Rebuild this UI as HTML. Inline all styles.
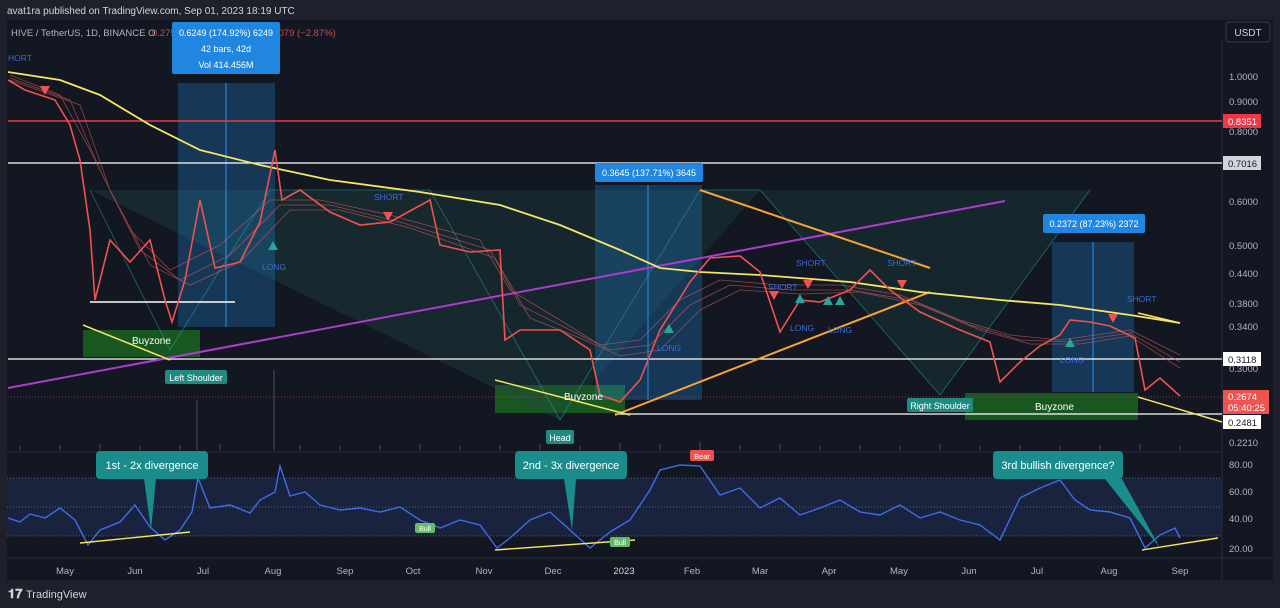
<!DOCTYPE html>
<html><head><meta charset="utf-8"><style>
body{margin:0;width:1280px;height:608px;background:#1e212b;overflow:hidden;font-family:"Liberation Sans",sans-serif}
svg{position:absolute;left:0;top:0}
</style></head><body>
<svg width="1280" height="608" viewBox="0 0 1280 608" font-family="Liberation Sans, sans-serif">
<rect width="1280" height="608" fill="#1e212b"/>
<text x="7" y="14" fill="#d1d4dc" font-size="10">avat1ra published on TradingView.com, Sep 01, 2023 18:19 UTC</text>
<rect x="7" y="20" width="1266" height="560" fill="#131722"/>
<line x1="1222" y1="40" x2="1222" y2="580" stroke="#2a2e39"/>
<line x1="7" y1="452" x2="1222" y2="452" stroke="#2a2e39"/>
<line x1="7" y1="558" x2="1273" y2="558" stroke="#2a2e39"/>
<rect x="1226" y="22" width="44" height="20" rx="3" fill="none" stroke="#363a45"/>
<text x="1248" y="36" fill="#d1d4dc" font-size="10" text-anchor="middle">USDT</text>
<text x="11" y="36" fill="#b2b5be" font-size="9.5">HIVE / TetherUS, 1D, BINANCE  O</text>
<text x="152" y="36" fill="#c94a4a" font-size="9.5">0.275</text>
<text x="236" y="36" fill="#c94a4a" font-size="9.5">2674  −0.0079 (−2.87%)</text>
<!-- buyzones -->
<rect x="83" y="330" width="117" height="27" fill="#1b5e20" opacity=".9"/>
<rect x="495" y="385" width="130" height="28" fill="#1b5e20" opacity=".9"/>
<rect x="965" y="393" width="173" height="27" fill="#1b5e20" opacity=".9"/>
<!-- teal shaded triangles area -->
<polygon points="90,190 430,190 560,420" fill="#1f4a48" opacity=".35"/>
<polygon points="430,190 1090,190 940,395 760,190 560,420" fill="#1f4a48" opacity=".3"/>
<polyline points="90,190 170,350 270,190 430,190 560,420 700,190 760,190 940,395 1090,190" fill="none" stroke="#26a69a" stroke-width=".8" opacity=".6"/>
<!-- measure boxes -->
<rect x="178" y="83" width="97" height="244" fill="#2196f3" opacity=".25"/>
<rect x="595" y="185" width="107" height="215" fill="#2196f3" opacity=".25"/>
<rect x="1052" y="242" width="82" height="150" fill="#2196f3" opacity=".25"/>
<line x1="226" y1="83" x2="226" y2="327" stroke="#2196f3"/>
<line x1="648" y1="185" x2="648" y2="400" stroke="#2196f3"/>
<line x1="1093" y1="242" x2="1093" y2="392" stroke="#2196f3"/>
<!-- horizontal lines -->
<line x1="8" y1="121" x2="1222" y2="121" stroke="#f23645" stroke-width="1.5"/>
<line x1="8" y1="163" x2="1222" y2="163" stroke="#fff" stroke-width="1.3"/>
<line x1="8" y1="359" x2="1222" y2="359" stroke="#fff" stroke-width="1.3"/>
<line x1="615" y1="414" x2="1222" y2="414" stroke="#fff" stroke-width="1.3"/>
<line x1="90" y1="302" x2="235" y2="302" stroke="#fff" stroke-width="1.5"/>
<line x1="8" y1="397" x2="1222" y2="397" stroke="#f23645" stroke-dasharray="1 2" opacity=".6"/>
<!-- purple / orange / yellow -->
<line x1="8" y1="388" x2="1005" y2="201" stroke="#b03ad0" stroke-width="2"/>
<line x1="615" y1="415" x2="930" y2="292" stroke="#f7a335" stroke-width="2"/>
<line x1="700" y1="190" x2="930" y2="268" stroke="#f7a335" stroke-width="2"/>
<line x1="83" y1="325" x2="170" y2="360" stroke="#f5e663" stroke-width="1.5"/>
<line x1="495" y1="380" x2="630" y2="415" stroke="#f5e663" stroke-width="1.5"/>
<line x1="1138" y1="397" x2="1222" y2="422" stroke="#f5e663" stroke-width="1.5"/>
<line x1="1138" y1="313" x2="1180" y2="323" stroke="#f5e663" stroke-width="1.5"/>
<!-- ribbon -->
<g fill="none" stroke="#e06060" stroke-width=".8" opacity=".6">
<polyline points="10,75 60,95 90,150 130,230 170,270 220,245 270,200 320,200 390,215 480,240 510,290 560,320 600,345 640,340 680,300 720,280 780,285 840,285 900,295 960,320 1010,335 1060,340 1130,330 1180,355"/>
<polyline points="10,78 70,100 100,170 140,250 180,280 230,255 280,205 330,205 400,222 490,250 520,305 570,330 610,350 650,345 690,305 730,285 790,290 850,290 910,300 970,325 1020,340 1070,342 1130,333 1180,362"/>
<polyline points="10,80 80,105 110,190 150,265 190,285 240,262 290,210 340,210 410,228 495,258 530,318 580,338 620,356 660,350 700,310 740,290 800,294 860,292 920,305 980,330 1030,344 1080,344 1130,336 1180,368"/>
</g>
<polyline fill="none" stroke="#f5e663" stroke-width="1.8" points="8,72 60,80 100,95 150,125 200,150 260,165 330,180 420,192 500,205 560,225 620,250 660,268 700,272 760,275 850,282 920,292 1000,300 1060,305 1130,315 1180,323"/>
<!-- price -->
<polyline fill="none" stroke="#ef5350" stroke-width="1.6" points="8,80 25,90 40,95 55,100 70,125 80,160 90,230 95,300 110,240 130,262 150,240 165,300 172,322 185,280 200,200 215,268 240,262 260,222 275,150 282,200 300,190 330,212 360,225 390,222 430,200 440,245 470,252 500,250 505,340 520,330 560,330 590,350 600,395 620,402 640,380 660,330 690,282 710,258 740,256 760,272 780,332 800,300 820,302 850,290 870,270 890,290 920,312 960,330 990,342 1000,382 1020,362 1040,346 1060,335 1070,320 1090,322 1110,326 1135,338 1145,390 1160,378 1180,396"/>
<g fill="#26a69a"><polygon points="268,250 278,250 273,241"/><polygon points="664,333 674,333 669,324"/><polygon points="795,303 805,303 800,294"/><polygon points="823,305 833,305 828,296"/><polygon points="835,305 845,305 840,296"/><polygon points="1065,347 1075,347 1070,338"/></g>
<g fill="#ef5350"><polygon points="40,86 50,86 45,95"/><polygon points="383,212 393,212 388,221"/><polygon points="769,291 779,291 774,300"/><polygon points="803,280 813,280 808,289"/><polygon points="897,280 907,280 902,289"/><polygon points="1108,314 1118,314 1113,323"/></g>
<g fill="#3a6bd8" font-size="8.5"><text x="8" y="61">HORT</text><text x="374" y="200">SHORT</text><text x="262" y="270">LONG</text><text x="657" y="351">LONG</text><text x="768" y="290">SHORT</text><text x="796" y="266">SHORT</text><text x="887" y="266">SHORT</text><text x="790" y="331">LONG</text><text x="828" y="333">LONG</text><text x="1060" y="363">LONG</text><text x="1127" y="302">SHORT</text></g>
<!-- volume -->
<g stroke="#4a4f5c" stroke-width="1"><path d="M20 450v-4M60 450v-5M100 450v-6M140 450v-4M180 450v-5M197 450v-50M220 450v-6M274 450v-80M300 450v-5M340 450v-4M380 450v-5M420 450v-6M460 450v-4M500 450v-5M540 450v-6M580 450v-4M620 450v-7M660 450v-6M700 450v-8M740 450v-5M780 450v-6M820 450v-4M860 450v-5M900 450v-4M940 450v-6M980 450v-4M1020 450v-5M1060 450v-4M1100 450v-5M1140 450v-6M1180 450v-4"/></g>
<!-- labels -->
<rect x="172" y="22" width="108" height="52" rx="2" fill="#2186e0"/>
<text x="226" y="36" fill="#fff" font-size="9" text-anchor="middle">0.6249 (174.92%) 6249</text>
<text x="226" y="52" fill="#fff" font-size="9" text-anchor="middle">42 bars, 42d</text>
<text x="226" y="68" fill="#fff" font-size="9" text-anchor="middle">Vol 414.456M</text>
<rect x="595" y="163" width="108" height="19" rx="2" fill="#2186e0"/><text x="649" y="176" fill="#fff" font-size="9" text-anchor="middle">0.3645 (137.71%) 3645</text>
<rect x="1043" y="214" width="102" height="19" rx="2" fill="#2186e0"/><text x="1094" y="227" fill="#fff" font-size="9" text-anchor="middle">0.2372 (87.23%) 2372</text>
<text x="132" y="344" fill="#fff" font-size="10">Buyzone</text>
<text x="564" y="400" fill="#fff" font-size="10">Buyzone</text>
<text x="1035" y="410" fill="#fff" font-size="10">Buyzone</text>
<rect x="165" y="370" width="62" height="14" rx="2" fill="#1f8a80"/><text x="196" y="381" fill="#fff" font-size="9" text-anchor="middle">Left Shoulder</text>
<rect x="546" y="430" width="28" height="14" rx="2" fill="#1f8a80"/><text x="560" y="441" fill="#fff" font-size="9" text-anchor="middle">Head</text>
<rect x="907" y="398" width="66" height="14" rx="2" fill="#1f8a80"/><text x="940" y="409" fill="#fff" font-size="9" text-anchor="middle">Right Shoulder</text>
<!-- price axis -->
<g fill="#b2b5be" font-size="9.5"><text x="1229" y="80">1.0000</text><text x="1229" y="105">0.9000</text><text x="1229" y="135">0.8000</text><text x="1229" y="205">0.6000</text><text x="1229" y="249">0.5000</text><text x="1229" y="277">0.4400</text><text x="1229" y="307">0.3800</text><text x="1229" y="330">0.3400</text><text x="1229" y="372">0.3000</text><text x="1229" y="446">0.2210</text><text x="1229" y="468">80.00</text><text x="1229" y="495">60.00</text><text x="1229" y="522">40.00</text><text x="1229" y="552">20.00</text></g>
<rect x="1223" y="100" width="37" height="0" fill="none"/>
<rect x="1223" y="114" width="38" height="14" fill="#f23645"/><text x="1228" y="125" fill="#fff" font-size="9.5">0.8351</text>
<rect x="1223" y="156" width="38" height="14" fill="#d1d4dc"/><text x="1228" y="167" fill="#131722" font-size="9.5">0.7016</text>
<rect x="1223" y="352" width="38" height="14" fill="#fff"/><text x="1228" y="363" fill="#131722" font-size="9.5">0.3118</text>
<rect x="1223" y="390" width="46" height="24" fill="#ef5350"/><text x="1228" y="400" fill="#fff" font-size="9.5">0.2674</text><text x="1228" y="411" fill="#fff" font-size="9.5">05:40:25</text>
<rect x="1223" y="415" width="38" height="14" fill="#fff"/><text x="1228" y="426" fill="#131722" font-size="9.5">0.2481</text>
<!-- RSI -->
<rect x="7" y="478" width="1215" height="58" fill="#1c2a4a" opacity=".7"/>
<g stroke="#5a6070" stroke-dasharray="1 2"><line x1="7" y1="478" x2="1222" y2="478"/><line x1="7" y1="507" x2="1222" y2="507"/><line x1="7" y1="536" x2="1222" y2="536"/></g>
<polyline fill="none" stroke="#3d6de8" stroke-width="1.4" points="8,518 20,522 30,514 45,518 60,508 75,520 88,545 100,530 120,522 135,505 150,527 165,540 180,530 192,512 198,478 210,508 230,505 250,513 260,500 275,492 280,466 290,496 305,492 320,505 340,510 360,508 380,512 400,507 420,520 440,528 460,520 480,525 497,548 510,538 530,520 550,512 570,530 590,548 610,532 630,520 650,490 660,470 680,465 700,466 720,495 740,488 760,508 780,498 800,515 820,508 840,500 860,512 880,515 900,505 920,518 940,512 960,520 980,525 1000,540 1020,498 1040,488 1060,480 1075,500 1090,510 1110,512 1130,518 1145,548 1160,535 1175,528 1180,538"/>
<g stroke="#f5e663" stroke-width="1.4"><line x1="80" y1="543" x2="190" y2="532"/><line x1="495" y1="550" x2="635" y2="540"/><line x1="1142" y1="550" x2="1218" y2="538"/></g>
<rect x="415" y="523" width="20" height="10" rx="2" fill="#66bb6a"/><text x="425" y="531" fill="#fff" font-size="7" text-anchor="middle">Bull</text>
<rect x="610" y="537" width="20" height="10" rx="2" fill="#66bb6a"/><text x="620" y="545" fill="#fff" font-size="7" text-anchor="middle">Bull</text>
<rect x="690" y="450" width="24" height="11" rx="2" fill="#ef5350"/><text x="702" y="459" fill="#fff" font-size="7.5" text-anchor="middle">Bear</text>
<g fill="#1a8c8c"><rect x="96" y="451" width="112" height="28" rx="4"/><polygon points="144,479 156,479 151,530"/>
<rect x="515" y="451" width="112" height="28" rx="4"/><polygon points="564,479 576,479 572,530"/>
<rect x="993" y="451" width="130" height="28" rx="4"/><polygon points="1105,479 1122,479 1160,548"/></g>
<g fill="#fff" font-size="11" text-anchor="middle"><text x="152" y="469">1st - 2x divergence</text><text x="571" y="469">2nd - 3x divergence</text><text x="1058" y="469">3rd bullish divergence?</text></g>
<!-- time axis -->
<g fill="#b2b5be" font-size="9.5" text-anchor="middle"><text x="65" y="574">May</text><text x="135" y="574">Jun</text><text x="203" y="574">Jul</text><text x="273" y="574">Aug</text><text x="345" y="574">Sep</text><text x="413" y="574">Oct</text><text x="484" y="574">Nov</text><text x="553" y="574">Dec</text><text x="624" y="574" fill="#d1d4dc">2023</text><text x="692" y="574">Feb</text><text x="760" y="574">Mar</text><text x="829" y="574">Apr</text><text x="899" y="574">May</text><text x="969" y="574">Jun</text><text x="1037" y="574">Jul</text><text x="1109" y="574">Aug</text><text x="1180" y="574">Sep</text></g>
<text x="8" y="598" fill="#d1d4dc" font-size="13" font-weight="bold">𝟏𝟕</text>
<text x="26" y="598" fill="#d1d4dc" font-size="11">TradingView</text>
</svg>
</body></html>
